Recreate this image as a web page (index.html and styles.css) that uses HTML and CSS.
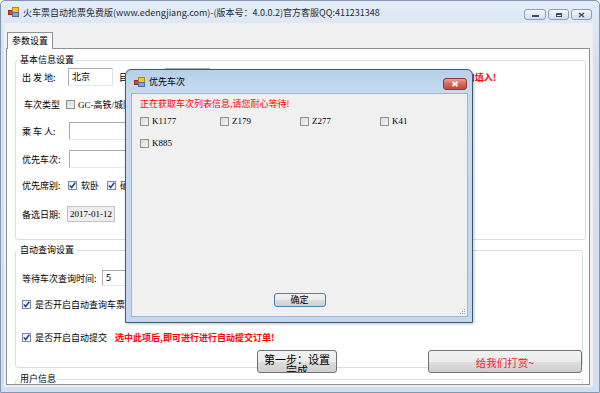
FILE: index.html
```html
<!DOCTYPE html>
<html lang="zh-CN">
<head>
    <meta charset="UTF-8">
    <title>火车票自动抢票免费版</title>
    <link rel="stylesheet" href="styles.css">
</head>
<body>
    <div class="window">
        <div class="titlebar">
            <svg class="app-icon" width="11" height="10" viewBox="0 0 11 10">
                <rect x="0.5" y="3.5" width="4" height="4" fill="#e2432c" stroke="#9a2b1c"/>
                <rect x="4.5" y="0.5" width="6" height="5" fill="#f7c823" stroke="#b48a12"/>
                <rect x="4.5" y="5.5" width="6" height="4" fill="#7fa6d6" stroke="#4b6f9e"/>
            </svg>
            <span class="title">火车票自动抢票免费版(www.edengjiang.com)-(版本号：4.0.0.2)官方客服QQ:411231348</span>
            <div class="caption">
                <span class="cbtn"><i class="g-min"></i></span>
                <span class="cbtn"><i class="g-max"></i></span>
                <span class="cbtn"><svg width="7" height="6" viewBox="0 0 7 6"><path d="M1 1 L6 5 M6 1 L1 5" stroke="#3c4d66" stroke-width="1.6"/></svg></span>
            </div>
        </div>

        <div class="client">
            <div class="tabs"><span class="tab">参数设置</span></div>
            <div class="tabpage">
                <fieldset class="group g1">
                    <legend>基本信息设置</legend>
                    <div class="row r1">
                        <span class="lbl w46">出 发 地:</span>
                        <span class="input w45">北京</span>
                        <span class="lbl to">目 的 地:</span>
                        <span class="input w45"></span>
                        <span class="hint">若未查询到车站请手动添加填入!</span>
                    </div>
                    <div class="row r2">
                        <span class="lbl type">车次类型</span>
                        <span class="cb"></span>
                        <span class="mono small">GC-高铁/城际</span>
                    </div>
                    <div class="row r3">
                        <span class="lbl w47">乘 车 人:</span>
                        <span class="input wide"></span>
                    </div>
                    <div class="row r4">
                        <span class="lbl w47">优先车次:</span>
                        <span class="input wide"></span>
                    </div>
                    <div class="row r5">
                        <span class="lbl w46">优先席别:</span>
                        <span class="cb on"><svg width="9" height="9" viewBox="0 0 9 9"><path d="M1.8 4.4 L3.7 6.5 L7.3 1.8" stroke="#23418f" stroke-width="1.5" fill="none"/></svg></span>
                        <span class="opt">软卧</span>
                        <span class="cb on"><svg width="9" height="9" viewBox="0 0 9 9"><path d="M1.8 4.4 L3.7 6.5 L7.3 1.8" stroke="#23418f" stroke-width="1.5" fill="none"/></svg></span>
                        <span class="opt">硬卧</span>
                    </div>
                    <div class="row r6">
                        <span class="lbl w45">备选日期:</span>
                        <span class="date mono">2017-01-12</span>
                    </div>
                </fieldset>

                <fieldset class="group g2">
                    <legend>自动查询设置</legend>
                    <div class="row q1">
                        <span class="lbl w80">等待车次查询时间:</span>
                        <span class="input small-in">5</span>
                    </div>
                    <div class="row q2">
                        <span class="cb on"><svg width="9" height="9" viewBox="0 0 9 9"><path d="M1.8 4.4 L3.7 6.5 L7.3 1.8" stroke="#23418f" stroke-width="1.5" fill="none"/></svg></span>
                        <span class="opt">是否开启自动查询车票</span>
                    </div>
                    <div class="row q3">
                        <span class="cb on"><svg width="9" height="9" viewBox="0 0 9 9"><path d="M1.8 4.4 L3.7 6.5 L7.3 1.8" stroke="#23418f" stroke-width="1.5" fill="none"/></svg></span>
                        <span class="opt">是否开启自动提交</span>
                        <span class="warn">选中此项后,即可进行进行自动提交订单!</span>
                    </div>
                    <div class="row btns">
                        <button class="btn step">第一步：设置完成</button>
                        <button class="btn reward">给我们打赏~</button>
                    </div>
                </fieldset>

                <fieldset class="group g3">
                    <legend>用户信息</legend>
                </fieldset>
            </div>
        </div>

        <div class="dialog">
            <div class="dlg-title">
                <svg class="app-icon" width="11" height="10" viewBox="0 0 11 10">
                    <rect x="0.5" y="3.5" width="4" height="4" fill="#e2432c" stroke="#9a2b1c"/>
                    <rect x="4.5" y="0.5" width="6" height="5" fill="#f7c823" stroke="#b48a12"/>
                    <rect x="4.5" y="5.5" width="6" height="4" fill="#7fa6d6" stroke="#4b6f9e"/>
                </svg>
                <span class="dlg-name">优先车次</span>
                <span class="dlg-close"><svg width="8" height="6" viewBox="0 0 8 6"><path d="M1.5 1 L6.5 5 M6.5 1 L1.5 5" stroke="#fff" stroke-width="1.8"/></svg></span>
            </div>
            <div class="dlg-client">
                <div class="loading">正在获取车次列表信息,请您耐心等待!</div>
                <div class="trains">
                    <label class="train"><span class="cb"></span><span class="mono">K1177</span></label>
                    <label class="train"><span class="cb"></span><span class="mono">Z179</span></label>
                    <label class="train"><span class="cb"></span><span class="mono">Z277</span></label>
                    <label class="train"><span class="cb"></span><span class="mono">K41</span></label>
                    <label class="train"><span class="cb"></span><span class="mono">K885</span></label>
                </div>
                <button class="btn ok">确定</button>
                <svg class="grip" width="6" height="6" viewBox="0 0 6 6">
                    <rect x="4" y="0" width="1" height="1" fill="#a8a8a8"/>
                    <rect x="2" y="2" width="1" height="1" fill="#a8a8a8"/>
                    <rect x="4" y="2" width="1" height="1" fill="#a8a8a8"/>
                    <rect x="0" y="4" width="1" height="1" fill="#a8a8a8"/>
                    <rect x="2" y="4" width="1" height="1" fill="#a8a8a8"/>
                    <rect x="4" y="4" width="1" height="1" fill="#a8a8a8"/>
                </svg>
            </div>
        </div>
    </div>
</body>
</html>
```

FILE: styles.css
```css
body { margin: 0; width: 600px; height: 393px; overflow: hidden; font-family: "Noto Sans CJK SC", "Noto Sans", sans-serif; font-size: 9px; color: #000; }

.window { position: relative; height: 393px; box-sizing: border-box; border: 1px solid #8497b0; border-radius: 5px 5px 0 0; padding: 0 6px 5px 3px; background: linear-gradient(#e3ecf7, #d4e1f0 60px, #d2dff0); display: flex; flex-direction: column; }

.titlebar { height: 22px; display: flex; align-items: center; flex: none; }
.app-icon { flex: none; }
.titlebar .app-icon { margin-left: 4px; }
.title { margin-left: 4px; color: #1f2a38; white-space: nowrap; }
.caption { margin-left: auto; margin-right: 1px; display: flex; align-self: flex-start; margin-top: 8px; }
.cbtn { width: 22px; height: 11px; margin-left: 2px; box-sizing: border-box; border: 1px solid #8c9fb9; border-radius: 3px; background: linear-gradient(#f6f9fd, #e1e9f4 50%, #d3dfee); display: flex; align-items: center; justify-content: center; }
.cbtn + .cbtn { width: 21px; }
.g-min { width: 7px; height: 2px; background: #3c4d66; margin-top: 2px; }
.g-max { width: 6px; height: 4px; box-sizing: border-box; border: 1px solid #3c4d66; border-top-width: 2px; }

.client { flex: 1; background: #f0f0f0; padding: 9px 3px 2px 2px; display: flex; flex-direction: column; min-height: 0; }
.tabs { display: flex; flex: none; }
.tab { position: relative; z-index: 1; margin: 0 0 -1px 1px; padding: 0 4px; line-height: 16px; border: 1px solid #8e9097; border-bottom: none; background: #fff; }
.tabpage { flex: 1; min-height: 0; overflow: hidden; border: 1px solid #8e9097; background: #fff; padding: 0 0 0 8px; }

.group { border: 1px solid #d5dfe5; border-radius: 3px; margin: 0; padding: 0; min-width: 0; }
.group legend { margin-left: 2px; padding: 0 2px; line-height: 12px; font-size: 9px; }
.g1 { margin: 5px 3px 0 0; padding: 2px 0 16px; }
.g2 { margin: 4px 6px 0 0; padding: 0; }
.g3 { margin: 5px 6px 0 0; height: 30px; }

.row { display: flex; align-items: center; height: 18px; padding-left: 6px; white-space: nowrap; }
.r2 { margin-top: 9px; }
.r3 { margin-top: 9px; }
.r4 { margin-top: 10px; }
.r5 { margin-top: 8px; }
.r6 { margin-top: 11px; }
.q1 { margin-top: 13px; }
.q2 { margin-top: 8px; }
.q3 { margin-top: 15px; }
.btns { margin-top: 4px; margin-bottom: -6px; height: 23px; align-items: stretch; }

.lbl { flex: none; }
.w45 { width: 45px; }
.w46 { width: 46px; }
.w47 { width: 47px; }
.w80 { width: 80px; }
.lbl.type { width: 42px; margin-left: 2px; }
.lbl.to { margin-left: 6px; width: 46px; }

.input { box-sizing: border-box; height: 18px; border: 1px solid #abadb3; border-right-color: #dbdfe6; border-bottom-color: #e3e9ef; background: #fff; padding: 0 3px; line-height: 16px; flex: none; }
.input.w45 { width: 45px; }
.input.wide { width: 200px; }
.input.small-in { width: 60px; height: 16px; line-height: 14px; }
.hint { margin-left: auto; margin-right: 89px; color: #ff0000; font-weight: bold; }

.mono { font-family: "Liberation Serif", "Noto Sans CJK SC", serif; font-size: 9px; }
.small { margin-left: 3px; }
.date { box-sizing: border-box; width: 48px; height: 16px; line-height: 14px; border: 1px solid #c2c2c2; background: #ededed; padding-left: 2px; overflow: hidden; }

.cb { flex: none; width: 9px; height: 9px; box-sizing: border-box; border: 1px solid #8f8f8f; background: linear-gradient(135deg, #d8d8d8, #f6f6f6); display: inline-flex; align-items: center; justify-content: center; }
.cb.on { background: linear-gradient(135deg, #e6ecf5, #fdfdfd); border-color: #7b8aa0; }
.cb svg { margin: -1px; }
.opt { margin-left: 4px; }
.r5 .opt { margin-right: 8px; }
.warn { margin-left: 8px; color: #ff0000; font-weight: bold; }

.btn { font-family: "Noto Sans CJK SC", sans-serif; color: #000; border: 1px solid #707070; border-radius: 3px; background: linear-gradient(#f2f2f2, #ebebeb 50%, #dddddd 51%, #cfcfcf); padding: 0; cursor: pointer; }
.step { margin-left: 235px; width: 80px; font-size: 11px; line-height: 11px; padding: 3px 6px 0; align-self: stretch; overflow: hidden; display: block; text-align: center; white-space: normal; }
.reward { margin-left: auto; width: 154px; font-size: 10.5px; color: #f0201c; padding-top: 2px; }

.dialog { position: absolute; left: 124px; top: 68px; width: 348px; height: 254px; box-sizing: border-box; border: 1px solid #3e5b74; border-radius: 6px 6px 0 0; padding: 0 4px 5px 5px; background: linear-gradient(#b7cfe9, #c6dbf0 24px, #c3d8ee); display: flex; flex-direction: column; box-shadow: 1px 1px 3px rgba(0, 0, 0, 0.25); }
.dlg-title { height: 23px; flex: none; display: flex; align-items: center; }
.dlg-title .app-icon { margin-left: 3px; }
.dlg-name { margin-left: 4px; }
.dlg-close { margin-left: auto; margin-right: 1px; align-self: flex-start; margin-top: 8px; width: 24px; height: 12px; box-sizing: border-box; border: 1px solid #8b3a30; border-radius: 3px; background: linear-gradient(#e8a593, #d2685a 50%, #c4473b); display: flex; align-items: center; justify-content: center; }
.dlg-client { position: relative; flex: 1; background: #f0f0f0; border: 1px solid #9fb6d1; padding: 4px 0 0 8px; display: flex; flex-direction: column; }
.loading { color: #ff0000; line-height: 12px; }
.trains { margin-top: 6px; display: grid; grid-template-columns: repeat(4, 80px); grid-auto-rows: 10px; row-gap: 12px; }
.train { display: flex; align-items: center; }
.train .mono { margin-left: 3px; }
.ok { margin: auto auto 9px; width: 52px; height: 14px; font-size: 9px; line-height: 12px; border-color: #3c86c4; position: relative; left: -4px; }
.grip { position: absolute; right: 1px; bottom: 1px; }
```
